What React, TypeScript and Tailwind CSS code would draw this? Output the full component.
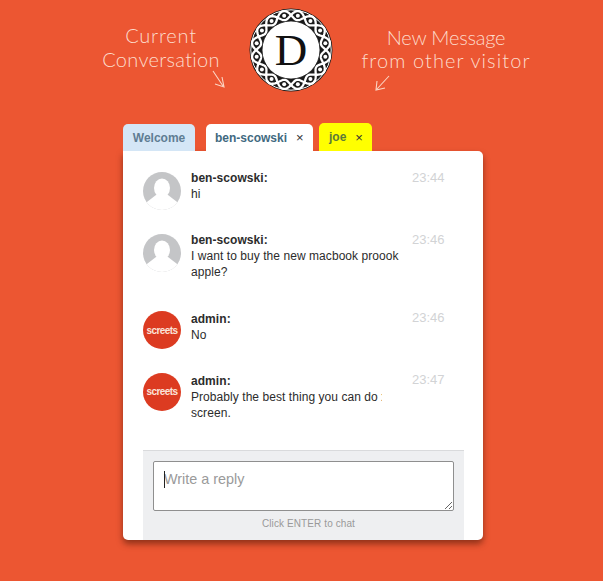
import React from 'react';

type Message = {
  name: string;
  time: string;
  lines: { text: string; width?: string }[];
  admin?: boolean;
};

const messages: Message[] = [
  { name: 'ben-scowski:', time: '23:44', lines: [{ text: 'hi' }] },
  {
    name: 'ben-scowski:',
    time: '23:46',
    lines: [{ text: 'I want to buy the new macbook proook', width: 'max-w-[208px]' }, { text: 'apple?' }],
  },
  { name: 'admin:', time: '23:46', lines: [{ text: 'No' }], admin: true },
  {
    name: 'admin:',
    time: '23:47',
    lines: [{ text: 'Probably the best thing you can do x', width: 'max-w-[191px]' }, { text: 'screen.' }],
    admin: true,
  },
];

// woven ring round the logo
const wave = (phase: number) => {
  const pts: string[] = [];
  for (let i = 0; i <= 240; i++) {
    const a = (i / 240) * Math.PI * 2;
    const r = 35 + 4.6 * Math.sin(a * 8 + phase);
    pts.push(`${(42 + r * Math.cos(a)).toFixed(2)},${(42 + r * Math.sin(a)).toFixed(2)}`);
  }
  return `M${pts.join('L')}Z`;
};

const Logo = () => (
  <svg width="84" height="84" viewBox="0 0 84 84" className="shrink-0">
    <circle cx="42" cy="42" r="41.5" fill="#1a1a1a" />
    <circle cx="42" cy="42" r="40.2" fill="none" stroke="#fff" strokeWidth="1" />
    <path d={wave(0)} fill="none" stroke="#fff" strokeWidth="2.3" />
    <path d={wave(Math.PI)} fill="none" stroke="#fff" strokeWidth="2.3" />
    {Array.from({ length: 16 }).map((_, i) => {
      const a = ((i + 0.5) / 16) * Math.PI * 2;
      return <circle key={i} cx={42 + 35 * Math.cos(a)} cy={42 + 35 * Math.sin(a)} r="2" fill="#fff" />;
    })}
    <circle cx="42" cy="42" r="29" fill="#fff" stroke="#1a1a1a" strokeWidth="0.8" />
    <text x="42" y="57" textAnchor="middle" fontSize="45" fill="#111" fontFamily="'Liberation Serif', serif">
      D
    </text>
  </svg>
);

const UserAvatar = () => (
  <svg width="38" height="38" viewBox="0 0 38 38" className="shrink-0">
    <defs>
      <clipPath id="avatarClip">
        <circle cx="19" cy="19" r="19" />
      </clipPath>
    </defs>
    <g clipPath="url(#avatarClip)">
      <rect width="38" height="38" fill="#c4c5c7" />
      <ellipse cx="19" cy="16" rx="8" ry="9.5" fill="#fff" />
      <path d="M13 23 L25 23 L38 33 L38 38 L0 38 L0 33 Z" fill="#fff" />
    </g>
  </svg>
);

const AdminAvatar = () => (
  <div className="w-[38px] h-[38px] shrink-0 rounded-full bg-[#dc3b21] flex items-center justify-center text-[#fbe3da] text-[10px] font-bold tracking-[-0.6px]">
    screets
  </div>
);

const TabClose = () => <span className="text-[13px] font-normal text-[#333] leading-none">×</span>;

export default function App() {
  return (
    <div className="w-[603px] h-[581px] overflow-hidden bg-[#ec5632] font-['Liberation_Sans',Arial,sans-serif]">
      <div className="flex h-[123px] items-start">
        <div className="ml-[102px] w-[118px] mt-[23px] flex flex-col items-center text-[#fcdccc] font-['Lato',sans-serif] font-light text-[20px] leading-[24px] tracking-[0.3px] whitespace-nowrap">
          <span className="tracking-[0.8px]">Current</span>
          <span>Conversation</span>
          <svg width="14" height="18" viewBox="0 0 14 18" className="self-end mr-[-6px] mt-[-1px]" fill="none" stroke="#fbd5c4" strokeWidth="1.1">
            <path d="M1 1 L11 16 M10 7 L12 17 L3 14" />
          </svg>
        </div>
        <div className="ml-[29px] mt-[8px]">
          <Logo />
        </div>
        <div className="ml-[29px] w-[168px] mt-[26px] flex flex-col items-center text-[#fcdccc] font-['Lato',sans-serif] font-light text-[20px] leading-[23px] whitespace-nowrap">
          <span className="tracking-[-0.2px]">New Message</span>
          <span className="tracking-[1.1px]">from other visitor</span>
          <svg width="16" height="16" viewBox="0 0 16 16" className="self-start ml-[13px] mt-[3px]" fill="none" stroke="#fbd5c4" strokeWidth="1.1">
            <path d="M14 1 L2 14 M2 6 L1 15 L10 13" />
          </svg>
        </div>
      </div>

      <div className="flex items-end h-[28px] pl-[123px] text-[12px] font-bold">
        <div className="w-[72px] h-[27px] flex items-center justify-center rounded-t-[5px] bg-[#d4e6f6] text-[#5f7d93]">
          Welcome
        </div>
        <div className="ml-[11px] w-[107px] h-[27px] pl-[9px] flex items-center gap-[9px] rounded-t-[5px] bg-white text-[#41697f]">
          ben-scowski
          <TabClose />
        </div>
        <div className="ml-[6px] w-[53px] h-[28px] pl-[10px] flex items-center gap-[9px] rounded-t-[5px] bg-[#ffff00] text-[#5c7a3a]">
          joe
          <TabClose />
        </div>
      </div>

      <div className="ml-[123px] w-[360px] h-[389px] bg-white rounded-b-[5px] rounded-tr-[5px] shadow-[0_4px_6px_rgba(70,20,5,0.55)] flex flex-col overflow-hidden">
        <div className="h-[299px] pl-[20px] pt-[21px] flex flex-col">
          {messages.map((m, i) => (
            <div key={i} className={`flex ${m.lines.length > 1 ? 'h-[78px]' : 'h-[62px]'}`}>
              <div className="w-[48px] shrink-0">{m.admin ? <AdminAvatar /> : <UserAvatar />}</div>
              <div className={`w-[221px] text-[12px] leading-[16px] tracking-[0.06px] text-[#2c2c2c] ${m.admin ? '' : '-mt-[2px]'}`}>
                <div className="font-bold">{m.name}</div>
                {m.lines.map(l => (
                  <div key={l.text} className={`overflow-hidden whitespace-nowrap ${l.width ?? ''}`}>
                    {l.text}
                  </div>
                ))}
              </div>
              <div className={`text-[13px] leading-[16px] text-[#d2d3d5] ${m.admin ? '-mt-[1px]' : '-mt-[2px]'}`}>{m.time}</div>
            </div>
          ))}
        </div>
        <div className="ml-[20px] w-[321px] h-[90px] bg-[#eeeff1] border-t border-[#d9dadc] pt-[10px] px-[10px] flex flex-col items-center">
          <div className="relative w-[301px] h-[50px] shrink-0">
            <textarea
              placeholder="Write a reply"
              className="block w-full h-full bg-white border border-[#8f8f8f] rounded-[2px] px-[10px] py-[8px] text-[14.4px] leading-[18px] placeholder:text-[#9a9a9a] outline-none resize-y"
            />
            <span className="absolute left-[11px] top-[10px] w-px h-[17px] bg-[#222]" />
          </div>
          <div className="mt-[6px] ml-[10px] text-[10px] leading-[14px] tracking-[0.1px] text-[#999]">Click ENTER to chat</div>
        </div>
      </div>
    </div>
  );
}
